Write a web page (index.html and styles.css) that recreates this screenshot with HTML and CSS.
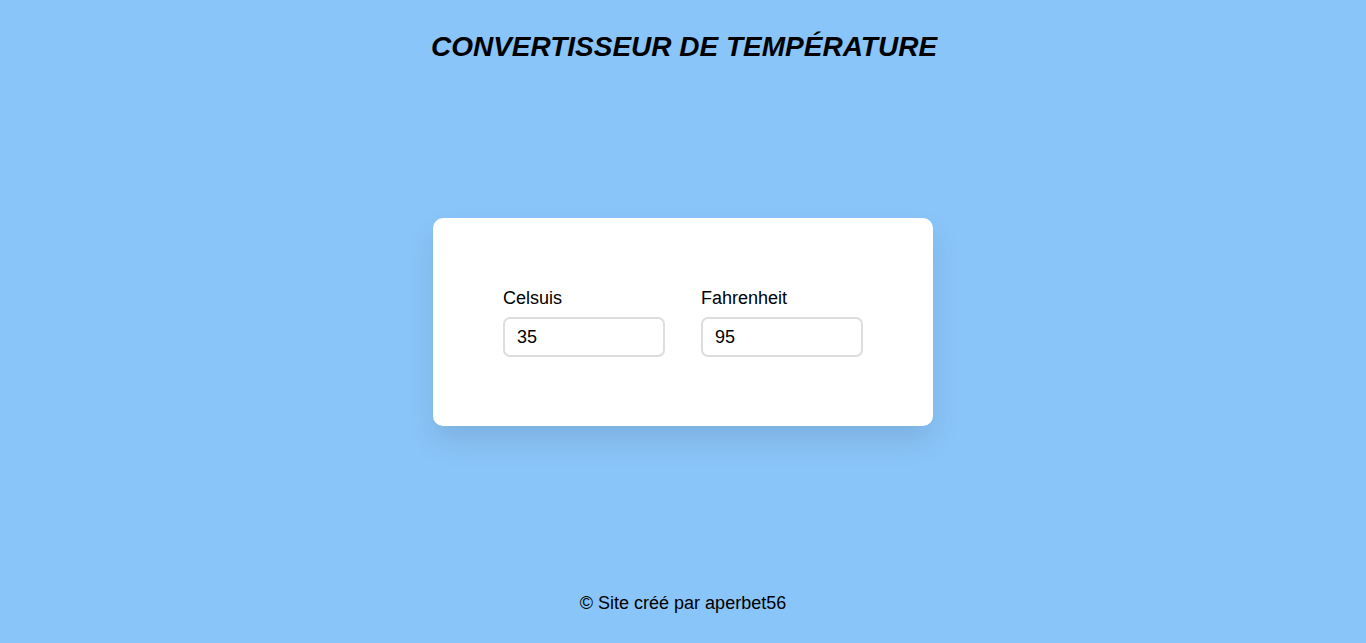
FILE: index.html
```html
<!DOCTYPE html>
<html lang="fr">
<head>
<meta charset="utf-8">
<title>Convertisseur de température</title>
<link rel="stylesheet" href="styles.css">
</head>
<body>
<header class="header">
  <h1 class="title">CONVERTISSEUR DE TEMPÉRATURE</h1>
</header>
<main class="main">
  <div class="card">
    <div class="field">
      <label class="label" for="celsius">Celsuis</label>
      <input class="input" id="celsius" type="text" value="35">
    </div>
    <div class="field">
      <label class="label" for="fahrenheit">Fahrenheit</label>
      <input class="input" id="fahrenheit" type="text" value="95">
    </div>
  </div>
</main>
<footer class="footer">
  <p class="credit">© Site créé par aperbet56</p>
</footer>
</body>
</html>
```
FILE: styles.css
```css
* { box-sizing: border-box; }
html, body { margin: 0; padding: 0; }
body {
  min-height: 100vh;
  background: #8ac5f9;
  font-family: "Liberation Sans", Arial, sans-serif;
  color: #000;
  display: grid;
  grid-template-rows: 90px 1fr 90px;
}
.header {
  display: flex;
  justify-content: center;
  padding-top: 31px;
  padding-left: 2px;
}
.title {
  margin: 0;
  font-size: 28px;
  line-height: 32px;
  font-weight: bold;
  font-style: italic;
}
.main {
  display: flex;
  align-items: center;
  justify-content: center;
}
.card {
  width: 500px;
  height: 208px;
  background: #fff;
  border-radius: 10px;
  box-shadow: 0 15px 30px rgba(0, 0, 0, 0.1);
  display: flex;
  align-items: center;
  padding: 2px 70px 0;
  gap: 36px;
}
.field {
  display: flex;
  flex-direction: column;
  gap: 8px;
  width: 162px;
}
.label {
  font-size: 18px;
  line-height: 21px;
}
.input {
  width: 162px;
  height: 40px;
  border: 2px solid #dddddd;
  border-radius: 7px;
  padding: 0 12px;
  font-family: "Liberation Sans", Arial, sans-serif;
  font-size: 18px;
  color: #000;
  background: #fff;
  outline: none;
}
.footer {
  display: flex;
  justify-content: center;
  padding-top: 40px;
}
.credit {
  margin: 0;
  font-size: 18px;
  line-height: 21px;
}
```
